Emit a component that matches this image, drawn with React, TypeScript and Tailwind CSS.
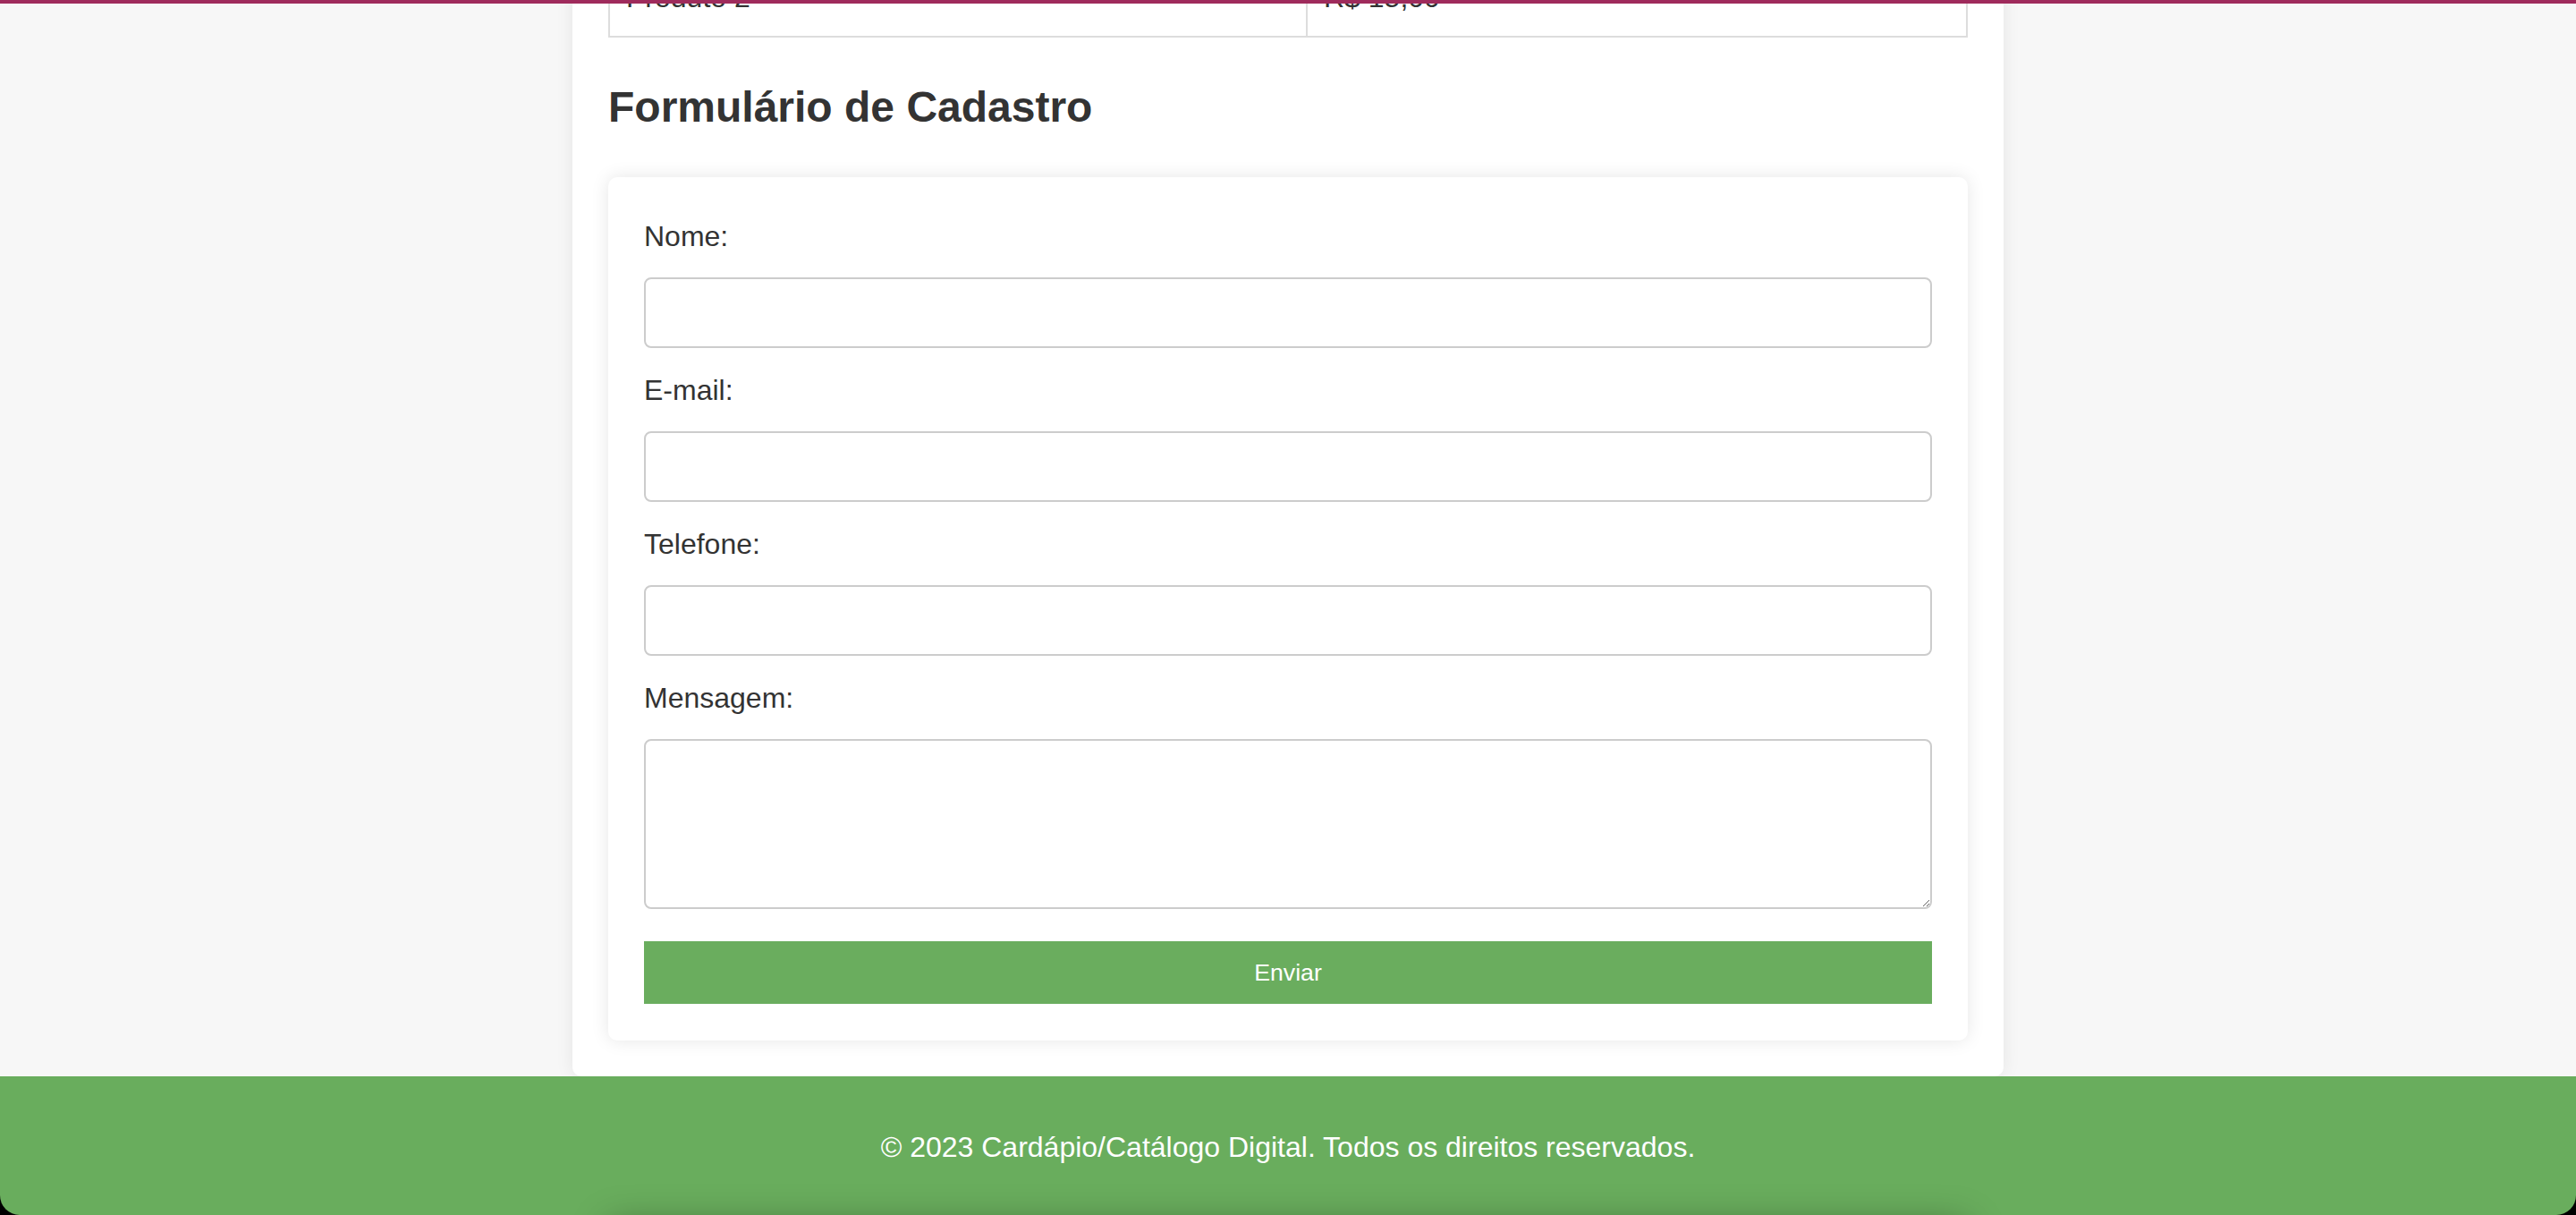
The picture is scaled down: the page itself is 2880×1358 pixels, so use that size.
import React from "react";

const font = { fontFamily: '"Liberation Sans", Arial, Helvetica, sans-serif' };

function Field({ label, textarea }: { label: string; textarea?: boolean }) {
  return (
    <div className="flex flex-col">
      <label className="h-[37px] pt-[2px] text-[32px] leading-[37px] text-[#333333]">{label}</label>
      {textarea ? (
        <textarea
          className="mt-[29px] block h-[190px] w-full rounded-[8px] border-2 border-[#cccccc] bg-white px-[20px] py-[20px] text-[32px] outline-none"
          style={font}
        />
      ) : (
        <input
          type="text"
          className="mt-[29px] block h-[79px] w-full rounded-[8px] border-2 border-[#cccccc] bg-white px-[20px] text-[32px] outline-none"
          style={font}
        />
      )}
    </div>
  );
}

export default function App() {
  return (
    <div className="relative h-[1358px] w-full overflow-hidden bg-[#f7f7f7]" style={font}>
      {/* top accent line */}
      <div className="absolute left-0 right-0 top-0 z-10 h-[4px] bg-[#9f2b5c]" />

      <main className="mx-auto w-[1600px] rounded-b-[10px] bg-white px-[40px] pb-[40px] shadow-[0_0_20px_rgba(0,0,0,0.08)]">
        {/* table tail */}
        <div className="-mt-[45px] grid grid-cols-[780px_1fr] border-x-2 border-b-2 border-[#dddddd] text-[32px] leading-[37px] text-[#333333]">
          <div className="border-r-2 border-[#dddddd] px-[18px] py-[24px]">Produto 2</div>
          <div className="px-[18px] py-[24px]">R$ 15,00</div>
        </div>

        <h2 className="mt-[50px] h-[55px] text-[48px] font-bold leading-[55px] text-[#333333]">
          Formulário de Cadastro
        </h2>

        <form className="mt-[51px] flex flex-col gap-[27px] rounded-[10px] bg-white px-[40px] pb-[41px] pt-[46px] shadow-[0_0_20px_rgba(0,0,0,0.1)]">
          <Field label="Nome:" />
          <Field label="E-mail:" />
          <Field label="Telefone:" />
          <div className="flex flex-col">
            <Field label="Mensagem:" textarea />
            <button
              type="button"
              className="mt-[36px] h-[70px] w-full bg-[#6aad5e] text-[26.67px] text-white"
              style={font}
            >
              Enviar
            </button>
          </div>
        </form>
      </main>

      <div className="bg-black">
        <footer className="relative h-[155px] overflow-hidden rounded-b-[22px] bg-[#69ad5d] pt-[61px] text-center text-[32px] leading-[37px] text-white">
          © 2023 Cardápio/Catálogo Digital. Todos os direitos reservados.
          <div className="absolute left-[680px] right-[680px] top-[165px] h-[200px] rounded-[10px] shadow-[0_0_40px_rgba(0,0,0,0.35)]" />
        </footer>
      </div>
    </div>
  );
}
